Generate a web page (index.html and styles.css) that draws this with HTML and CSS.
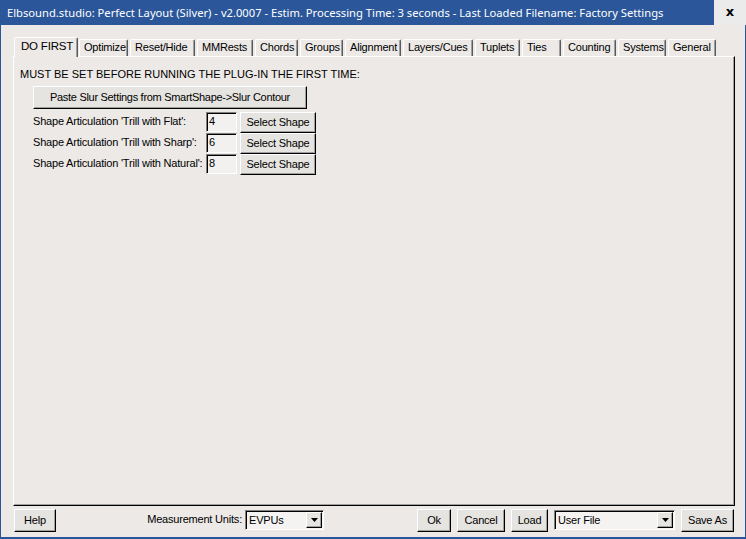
FILE: index.html
```html
<!DOCTYPE html>
<html>
<head>
<meta charset="utf-8">
<link rel="stylesheet" href="styles.css">
</head>
<body>
<div class="window">
  <div class="titlebar">
    <div class="title">Elbsound.studio: Perfect Layout (Silver) - v2.0007 - Estim. Processing Time: 3 seconds - Last Loaded Filename: Factory Settings</div>
    <div class="close">x</div>
  </div>
  <div class="client">
    <div class="tabs">
      <div class="tab t1 selected">DO FIRST</div>
      <div class="tab t2">Optimize</div>
      <div class="tab t3">Reset/Hide</div>
      <div class="tab t4">MMRests</div>
      <div class="tab t5">Chords</div>
      <div class="tab t6">Groups</div>
      <div class="tab t7">Alignment</div>
      <div class="tab t8">Layers/Cues</div>
      <div class="tab t9">Tuplets</div>
      <div class="tab t10">Ties</div>
      <div class="tab t11">Counting</div>
      <div class="tab t12">Systems</div>
      <div class="tab t13">General</div>
    </div>
    <div class="panel">
      <div class="heading">MUST BE SET BEFORE RUNNING THE PLUG-IN THE FIRST TIME:</div>
      <div class="btn paste">Paste Slur Settings from SmartShape-&gt;Slur Contour</div>
      <div class="rows">
        <div class="row">
          <span class="label">Shape Articulation 'Trill with Flat':</span>
          <span class="field">4</span>
          <span class="btn select">Select Shape</span>
        </div>
        <div class="row">
          <span class="label">Shape Articulation 'Trill with Sharp':</span>
          <span class="field">6</span>
          <span class="btn select">Select Shape</span>
        </div>
        <div class="row">
          <span class="label">Shape Articulation 'Trill with Natural':</span>
          <span class="field">8</span>
          <span class="btn select">Select Shape</span>
        </div>
      </div>
    </div>
    <div class="footer">
      <div class="btn help">Help</div>
      <div class="units-label">Measurement Units:</div>
      <div class="combo units">
        <span class="combo-text">EVPUs</span>
        <span class="combo-arrow"><svg width="7" height="4" viewBox="0 0 7 4"><path d="M0 0H7L3.5 4Z" fill="#000"/></svg></span>
      </div>
      <div class="btn ok">Ok</div>
      <div class="btn cancel">Cancel</div>
      <div class="btn load">Load</div>
      <div class="combo userfile">
        <span class="combo-text">User File</span>
        <span class="combo-arrow"><svg width="7" height="4" viewBox="0 0 7 4"><path d="M0 0H7L3.5 4Z" fill="#000"/></svg></span>
      </div>
      <div class="btn saveas">Save As</div>
    </div>
  </div>
</div>
</body>
</html>
```

FILE: styles.css
```css
* { box-sizing: border-box; }
html, body { margin: 0; padding: 0; }
body {
  background: #ece9e6;
  font-family: "Liberation Sans", Arial, sans-serif;
  font-size: 11px;
  letter-spacing: -0.2px;
  color: #000;
}
.window {
  width: 746px;
  height: 539px;
  display: flex;
  flex-direction: column;
  border-left: 1px solid #2b579a;
  border-right: 1px solid #2b579a;
  border-bottom: 2px solid #2b579a;
  background: #ece9e6;
}
.titlebar {
  height: 25px;
  background: #2b579a;
  display: flex;
  align-items: stretch;
  margin-right: -1px;
}
.title {
  flex: 1;
  color: #fff;
  font-family: "Noto Sans", "Open Sans", sans-serif;
  font-size: 11.2px;
  letter-spacing: 0;
  line-height: 25px;
  padding-left: 6px;
  white-space: nowrap;
  overflow: hidden;
}
.close {
  width: 32px;
  background: #ebebeb;
  color: #000;
  font-family: "DejaVu Sans", sans-serif;
  font-weight: bold;
  font-size: 13px;
  letter-spacing: 0;
  text-align: center;
  line-height: 23px;
}
.client {
  flex: 1;
  display: flex;
  flex-direction: column;
  padding: 12px 10px 0 12px;
}
.tabs {
  display: flex;
  align-items: flex-end;
  padding-left: 1px;
  height: 19px;
  position: relative;
  z-index: 1;
}
.tab {
  height: 17px;
  margin-right: 2px;
  padding-left: 4px;
  line-height: 15px;
  border-top: 1px solid #fff;
  border-left: 1px solid #fff;
  border-right: 1px solid #5a5a5a;
  border-radius: 2px 2px 0 0;
  box-shadow: inset -1px 0 0 #a0a0a0;
  white-space: nowrap;
  overflow: hidden;
}
.tab.selected {
  height: 20px;
  margin-bottom: -1px;
  padding-left: 6px;
  line-height: 16px;
  font-size: 11.5px;
  background: #ece9e6;
  margin-right: 1px;
}
.t1 { width: 64px; }
.t2 { width: 49px; }
.t3 { width: 65px; }
.t4 { width: 56px; }
.t5 { width: 43px; }
.t6 { width: 43px; }
.t7 { width: 56px; }
.t8 { width: 70px; }
.t9 { width: 45px; }
.t10 { width: 39px; }
.t11 { width: 53px; }
.t12 { width: 48px; }
.t13 { width: 48px; }
.panel {
  width: 722px;
  height: 450px;
  border-top: 1px solid #fff;
  border-left: 1px solid #fff;
  border-right: 1px solid #000;
  border-bottom: 1px solid #000;
  box-shadow: inset -1px -1px 0 #a0a0a0;
  padding: 10px 6px 0 6px;
}
.heading {
  line-height: 14px;
  letter-spacing: 0;
}
.btn {
  display: flex;
  align-items: center;
  justify-content: center;
  padding-bottom: 1px;
  border-top: 1px solid #fff;
  border-left: 1px solid #fff;
  border-right: 1px solid #000;
  border-bottom: 1px solid #000;
  box-shadow: inset -1px -1px 0 #a0a0a0, inset 1px 1px 0 #e3e3e3;
  background: #e6e4e1;
  white-space: nowrap;
}
.paste {
  margin: 5px 0 0 13px;
  width: 274px;
  height: 23px;
  letter-spacing: -0.3px;
}
.rows {
  margin: 3px 0 0 13px;
  display: flex;
  flex-direction: column;
}
.row {
  display: flex;
  align-items: flex-start;
  height: 21px;
}
.label {
  width: 173px;
  line-height: 18px;
  white-space: nowrap;
}
.field {
  width: 31px;
  height: 20px;
  border-top: 1px solid #808080;
  border-left: 1px solid #808080;
  border-right: 1px solid #fff;
  border-bottom: 1px solid #fff;
  box-shadow: inset 1px 1px 0 #000;
  background: #f2f1f0;
  padding-left: 2px;
  line-height: 17px;
}
.select {
  margin-left: 3px;
  width: 76px;
  height: 21px;
}
.footer {
  display: flex;
  align-items: flex-start;
  padding-top: 3px;
  padding-left: 1px;
}
.footer .btn { height: 23px; }
.help { width: 42px; }
.units-label {
  width: 186px;
  text-align: right;
  line-height: 21px;
  white-space: nowrap;
}
.combo {
  margin-top: 1px;
  height: 20px;
  display: flex;
  align-items: stretch;
  border-top: 1px solid #808080;
  border-left: 1px solid #808080;
  border-right: 1px solid #fff;
  border-bottom: 1px solid #fff;
  box-shadow: inset 1px 1px 0 #000;
  background: #f4f3f2;
  padding: 1px;
}
.combo-text {
  flex: 1;
  padding-left: 2px;
  line-height: 16px;
}
.combo-arrow {
  width: 16px;
  display: flex;
  align-items: center;
  justify-content: center;
  border-top: 1px solid #fff;
  border-left: 1px solid #fff;
  border-right: 1px solid #000;
  border-bottom: 1px solid #000;
  box-shadow: inset -1px -1px 0 #a0a0a0;
  background: #e6e4e1;
}
.units { margin-left: 3px; width: 79px; }
.ok { margin-left: 93px; width: 34px; }
.cancel { margin-left: 6px; width: 48px; }
.load { margin-left: 6px; width: 37px; }
.userfile { margin-left: 6px; width: 121px; }
.saveas { margin-left: 6px; width: 53px; }
```
